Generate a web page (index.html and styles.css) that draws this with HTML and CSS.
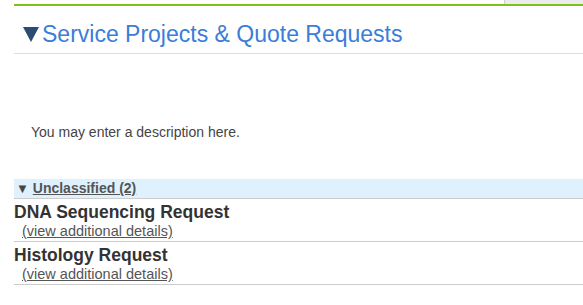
FILE: index.html
```html
<!DOCTYPE html>
<html lang="en">
<head>
    <meta charset="UTF-8">
    <meta name="viewport" content="width=device-width, initial-scale=1.0">
    <title>Service Projects</title>
    <link rel="stylesheet" href="styles.css">
</head>
<body>

    <div class="top-bar">
        <div class="top-tab"></div>
    </div>

    <div class="container">
        <h2 class="section-title"><span class="arrow"></span>Service Projects &amp; Quote Requests</h2>

        <p class="description">You may enter a description here.</p>

        <div class="group-header">
            <span class="small-arrow">&#9660;</span> <a href="#">Unclassified (2)</a>
        </div>

        <div class="project">
            <h3>DNA Sequencing Request</h3>
            <a href="#">(view additional details)</a>
        </div>
        <div class="project">
            <h3>Histology Request</h3>
            <a href="#">(view additional details)</a>
        </div>
    </div>

</body>
</html>
```

FILE: styles.css
```css
body {
    margin: 0;
    font-family: Arial, "Liberation Sans", sans-serif;
    background: white;
    color: #444;
}
.top-bar {
    margin-left: 14px;
    height: 4px;
    border-bottom: 2px solid #7dc11f;
    display: flex;
    justify-content: flex-end;
}
.top-tab {
    width: 78px;
    height: 4px;
    background: #ececec;
    border-left: 1px solid #cfcfcf;
}
.container {
    padding-left: 14px;
}
.section-title {
    margin: 0;
    padding: 14px 0 5px 9px;
    font-size: 23px;
    font-weight: normal;
    color: #3b7dd8;
    border-bottom: 1px solid #d3e0e6;
    line-height: 28px;
    display: flex;
    align-items: center;
}
.arrow {
    width: 0;
    height: 0;
    border-left: 8px solid transparent;
    border-right: 8px solid transparent;
    border-top: 15px solid #2b4c74;
    margin-right: 3px;
    margin-top: 1px;
}
.description {
    margin: 0;
    padding: 70px 0 0 17px;
    font-size: 14px;
    line-height: 16px;
    color: #444;
    height: 55px;
}
.group-header {
    background: #dff1fd;
    border-bottom: 1px solid #cccccc;
    height: 19px;
    line-height: 19px;
    padding-left: 2px;
    font-size: 14px;
    font-weight: bold;
    color: #444;
}
.small-arrow {
    font-size: 13px;
}
.group-header a {
    color: #555;
}
.project {
    border-bottom: 1px solid #cccccc;
    padding: 3px 0 1px 0;
}
.project h3 {
    margin: 0;
    font-size: 17.5px;
    line-height: 20px;
    color: #333;
}
.project a {
    display: inline-block;
    margin-left: 8px;
    font-size: 14.5px;
    line-height: 17px;
    color: #555;
}
```
